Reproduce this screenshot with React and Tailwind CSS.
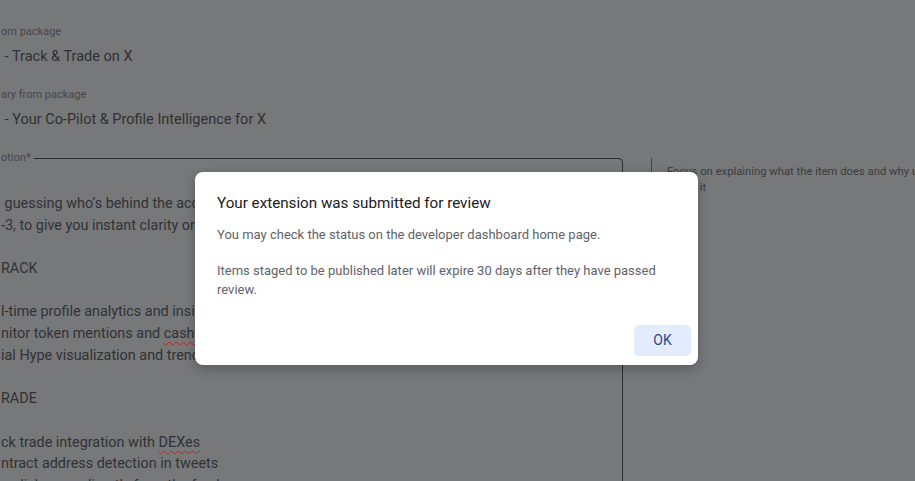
const LINES = [
  { t: ' guessing who\u2019s behind the account again? We use Web3 data and on-chain signals' },
  { t: '-3, to give you instant clarity on every profile you visit.' },
  { t: '' },
  { t: 'RACK' },
  { t: '' },
  { t: 'l-time profile analytics and insights for every account on X' },
  { t: 'nitor token mentions and ', sq: 'cashtags', after: ' across your timeline' },
  { t: 'ial Hype visualization and trend tracking over time' },
  { t: '' },
  { t: 'RADE' },
  { t: '' },
  { t: 'ck trade integration with ', sq: 'DEXes', after: '' },
  { t: 'ntract address detection in tweets' },
  { t: 'e-click swap directly from the feed' },
];

function DescLine({ line }) {
  return (
    <div className="h-[21.7px] leading-[21.7px] whitespace-pre">
      {line.t}
      {line.sq && (
        <span className="underline decoration-wavy decoration-[#c5221f] decoration-1 underline-offset-[3px]">
          {line.sq}
        </span>
      )}
      {line.after}
    </div>
  );
}

export default function App() {
  return (
    <div
      className="relative w-[915px] h-[481px] overflow-hidden bg-[#77787a]"
      style={{ fontFamily: 'Roboto, "Liberation Sans", sans-serif' }}
    >
      <div className="flex">
        {/* form column */}
        <div className="w-[623px] shrink-0 pl-[1px]">
          <div className="pt-[25px] text-[11px] leading-[14px] text-[#46474a]">om package</div>
          <div className="mt-[8px] text-[14.5px] leading-[20px] text-[#2f3033] whitespace-pre"> - Track &amp; Trade on X</div>
          <div className="mt-[21px] text-[11px] leading-[14px] text-[#46474a]">ary from package</div>
          <div className="mt-[8px] text-[14.5px] leading-[20px] text-[#2f3033] whitespace-pre"> - Your Co-Pilot &amp; Profile Intelligence for X</div>

          <div className="relative mt-[28px] h-[400px] border-t border-r border-[#2c2d30] rounded-tr-[5px]">
            <span className="absolute -top-[8px] left-0 pr-[3px] bg-[#77787a] text-[11px] leading-[14px] text-[#46474a]">
              otion*
            </span>
            <div className="pt-[34px] overflow-hidden text-[14.4px] text-[#313235]">
              {LINES.map((line, i) => (
                <DescLine key={i} line={line} />
              ))}
            </div>
          </div>
        </div>

        {/* hint column */}
        <div className="ml-[28px] mt-[158px] flex">
          <div className="w-px h-[40px] bg-[#3a4656]" />
          <div className="pl-[15px] pt-[6px] text-[11.25px] leading-[16px] text-[#3b3c3f] whitespace-nowrap">
            <div>Focus on explaining what the item does and why users should</div>
            <div>install it</div>
          </div>
        </div>
      </div>

      {/* dialog */}
      <div className="absolute left-[195px] top-[172px] w-[503px] h-[193px] bg-white rounded-[8px] shadow-[0_4px_12px_rgba(0,0,0,0.25)] flex flex-col pl-[22px] pr-[7px] pt-[21px] pb-[9px]">
        <div className="text-[15.2px] leading-[20px] text-[#202124]">Your extension was submitted for review</div>
        <p className="mt-[12px] text-[13px] leading-[19px] text-[#5f6368]">
          You may check the status on the developer dashboard home page.
        </p>
        <p className="mt-[17px] pr-[15px] text-[13px] leading-[19px] text-[#5f6368]">
          Items staged to be published later will expire 30 days after they have passed review.
        </p>
        <div className="mt-auto flex justify-end">
          <button className="w-[57px] h-[31px] rounded-[5px] bg-[#e3ecfa] text-[14px] text-[#2a4a90]">
            OK
          </button>
        </div>
      </div>
    </div>
  );
}
